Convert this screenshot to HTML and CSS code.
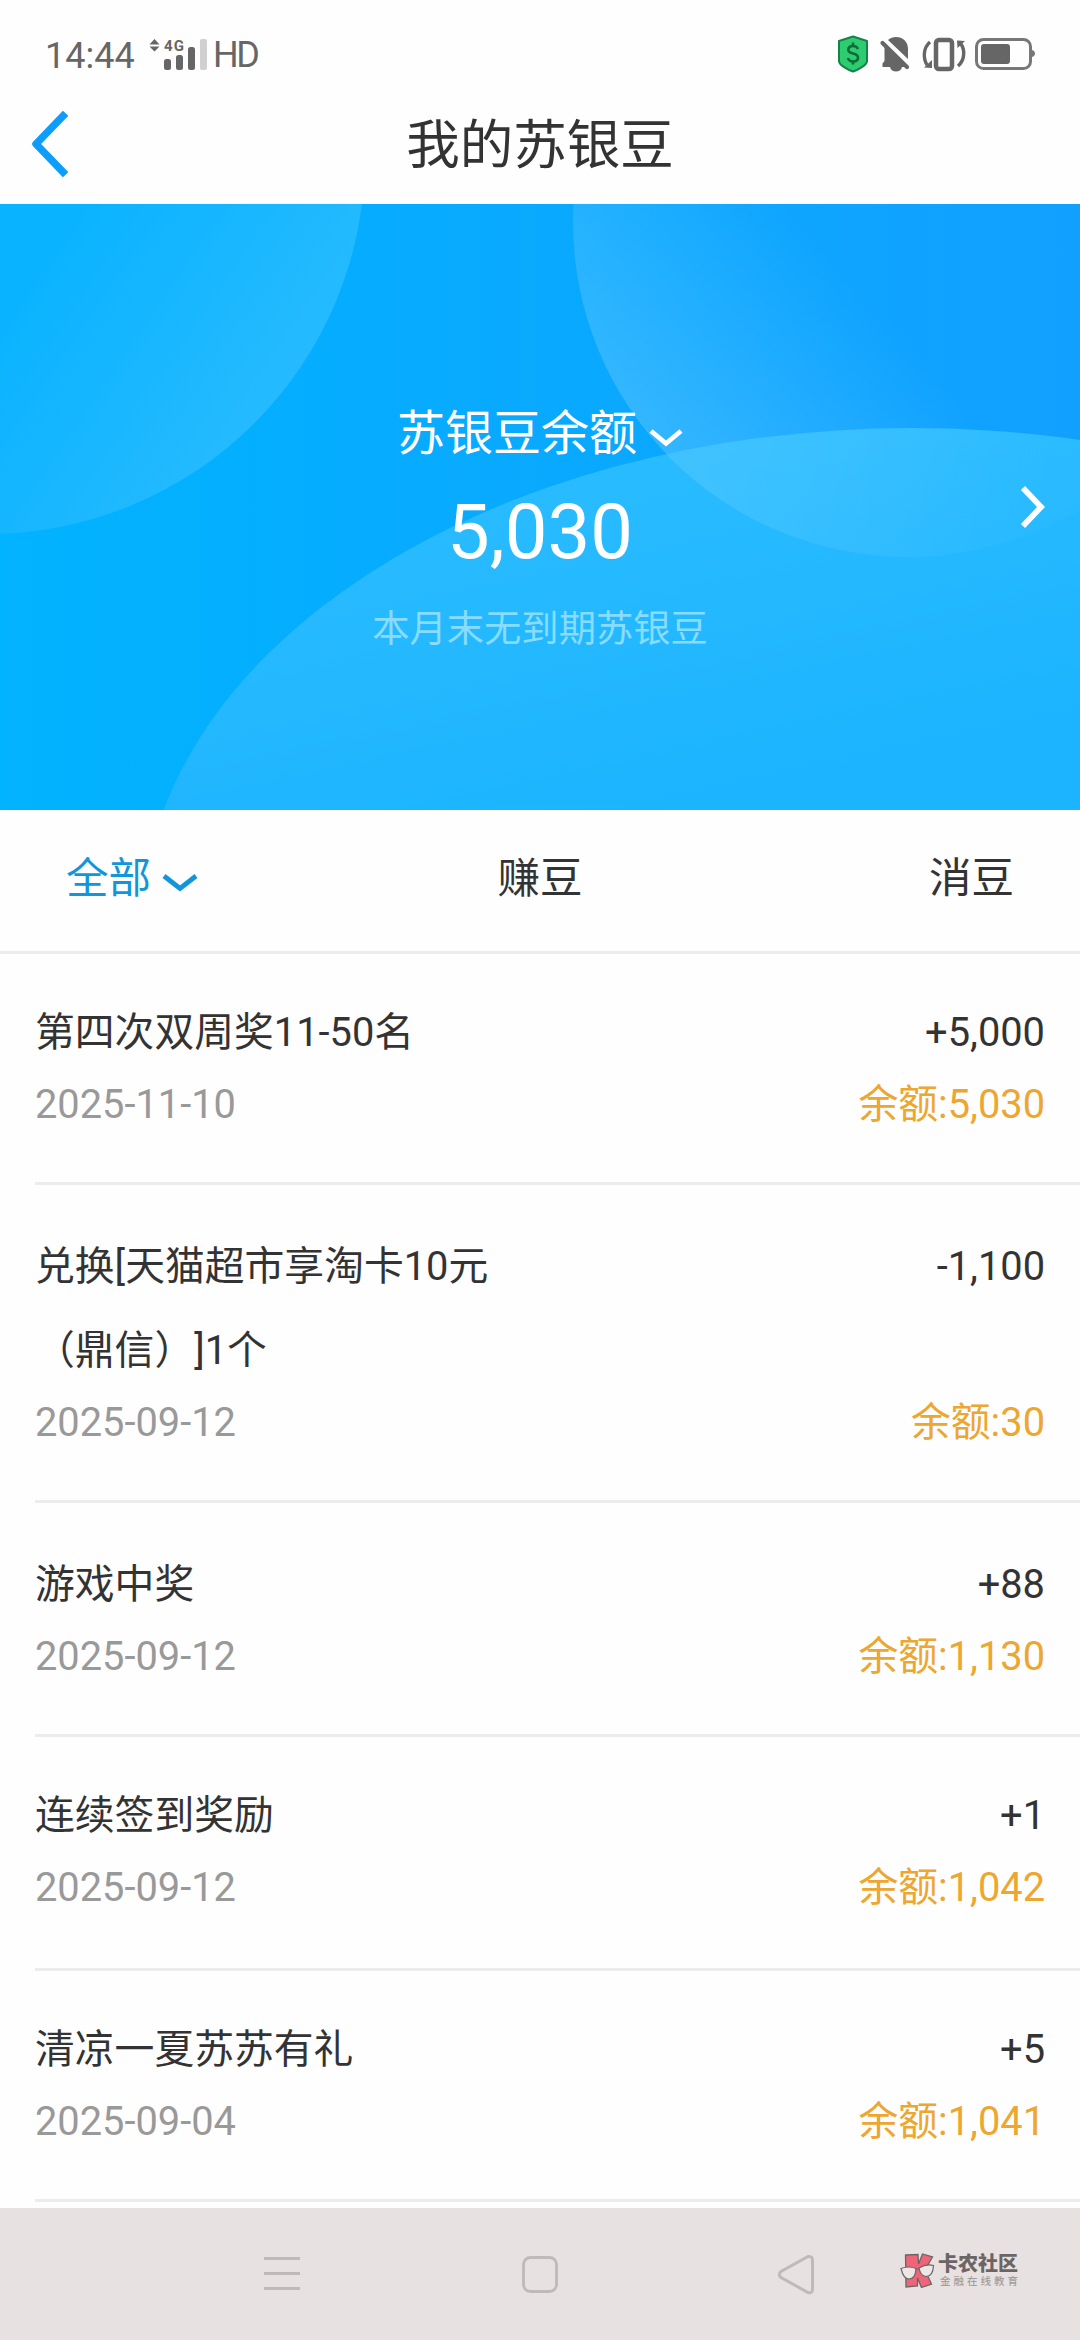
FILE: index.html
```html
<!DOCTYPE html>
<html lang="zh-CN">
<head>
<meta charset="utf-8">
<title>我的苏银豆</title>
<link rel="stylesheet" href="styles.css">
</head>
<body>
<header class="status">
  <span class="clock">14:44</span>
  <svg class="signal" width="60" height="34" viewBox="0 0 60 34">
    <path d="M0.5 6.500L5.500 1L10.500 6.500ZM0.500 8.500L5.500 13.500L10.500 8.500Z" fill="#666"/>
    <text x="15" y="13" class="net" textLength="20">4G</text>
    <g fill="#666"><rect x="15" y="21" width="7" height="11" rx="2.500"/><rect x="27" y="17" width="7" height="15" rx="2.500"/><rect x="39" y="9" width="7" height="23" rx="2.500"/></g>
    <rect x="51" y="1" width="7" height="31" rx="2" fill="#d0d0d0"/>
  </svg>
  <span class="hd">HD</span>
  <svg class="tray" width="200" height="38" viewBox="837 35 200 38">
    <path d="M853 36.500L867 41V61C867 65 858 70 853 71.500C848 70 839 65 839 61V41Z" fill="#2ecc71" stroke="#16824a" stroke-width="2" stroke-linejoin="round"/>
    <path d="M858 49C857 46.500 855.500 46 853 46C850 46 848.300 47.500 848.300 49.800C848.300 55 858 52 858 57.500C858 60 856 61.500 853 61.500C850 61.500 848.500 60 848 58M853 42.500V46M853 61.500V64.500" fill="none" stroke="#106b3b" stroke-width="2.600"/>
    <path d="M888 40C890 38 893 37 896 37C904 37 908 43 908 49V59Z" fill="#666"/>
    <path d="M884.500 47L905 67H882.500V63.500L884.500 61Z" fill="#666"/>
    <path d="M890 67H902C901 73 891 73 890 67Z" fill="#666"/>
    <path d="M882.500 43L907 67" stroke="#666" stroke-width="4.200" stroke-linecap="round"/>
    <rect x="936" y="40" width="16" height="29" rx="3" fill="none" stroke="#666" stroke-width="4.500"/>
    <path d="M930 42C923 48 923 58 927 65M958 66C965 60 965 50 961 44" fill="none" stroke="#666" stroke-width="3.400"/>
    <path d="M924 67.500L932 68V60ZM957 40.500L965 41L957.500 48Z" fill="#666"/>
    <rect x="976.500" y="39.500" width="54" height="29" rx="7" fill="none" stroke="#777" stroke-width="3"/>
    <rect x="981" y="44" width="29" height="20" rx="3" fill="#666"/>
    <path d="M1032 50C1036 51 1036 56 1032 57Z" fill="#777"/>
  </svg>
</header>
<nav class="titlebar">
  <svg class="back" width="38" height="66" viewBox="0 0 38 66"><path d="M33 5L6 33L33 61" fill="none" stroke="#0d9dfc" stroke-width="7.500" stroke-linejoin="round" stroke-linecap="square"/></svg>
  <h1>我的苏银豆</h1>
</nav>
<section class="hero">
  <svg class="hero-bg" width="1080" height="606" viewBox="0 204 1080 606">
    <defs>
      <linearGradient id="base"><stop offset="0" stop-color="#02b3ff"/><stop offset=".3" stop-color="#05adff"/><stop offset="1" stop-color="#12a0ff"/></linearGradient>
      <linearGradient id="left" gradientUnits="userSpaceOnUse" x1="60" y1="230" x2="310" y2="400"><stop offset="0" stop-color="#0ab3ff"/><stop offset="1" stop-color="#28bbff"/></linearGradient>
      <linearGradient id="right" gradientUnits="userSpaceOnUse" x1="650" y1="440" x2="850" y2="270"><stop offset="0" stop-color="#fff" stop-opacity=".17"/><stop offset="1" stop-color="#fff" stop-opacity="0"/></linearGradient>
      <linearGradient id="hill" gradientUnits="userSpaceOnUse" x1="600" y1="430" x2="680" y2="810"><stop offset="0" stop-color="#2bbcff"/><stop offset="1" stop-color="#1cb4ff"/></linearGradient>
      <linearGradient id="lens" gradientUnits="userSpaceOnUse" x1="700" y1="450" x2="1030" y2="540"><stop offset="0" stop-color="#fff" stop-opacity=".11"/><stop offset="1" stop-color="#fff" stop-opacity=".02"/></linearGradient>
      <clipPath id="hillclip"><ellipse cx="912" cy="928" rx="770" ry="500"/></clipPath>
    </defs>
    <rect y="204" width="1080" height="606" fill="url(#base)"/>
    <circle cx="-13" cy="156" r="378" fill="url(#left)"/>
    <circle cx="908" cy="222" r="335" fill="url(#right)"/>
    <ellipse cx="912" cy="928" rx="770" ry="500" fill="url(#hill)"/>
    <circle cx="908" cy="222" r="335" fill="url(#lens)" clip-path="url(#hillclip)"/>
  </svg>
  <div class="hero-text">
    <div class="label">苏银豆余额<svg width="34" height="20" viewBox="0 0 34 20"><path d="M2 3L17 15.500L32 3" fill="none" stroke="#fff" stroke-width="4.800"/></svg></div>
    <div class="amount">5,030</div>
    <div class="note">本月末无到期苏银豆</div>
  </div>
  <svg class="more" width="26" height="44" viewBox="0 0 26 44"><path d="M3 3L21 22L3 41" fill="none" stroke="#fff" stroke-width="5.800"/></svg>
</section>
<div class="tabs">
  <div class="tab active">全部<svg width="36" height="20" viewBox="0 0 36 20"><path d="M2 3L18 15.500L34 3" fill="none" stroke="#1296db" stroke-width="4.800"/></svg></div>
  <div class="tab">赚豆</div>
  <div class="tab">消豆</div>
</div>
<main class="list">
  <article class="item"><div class="top"><span class="name">第四次双周奖11-50名</span><span>+5,000</span></div><div class="sub"><span>2025-11-10</span><span class="bal">余额:5,030</span></div></article>
  <article class="item"><div class="top"><span class="name">兑换[天猫超市享淘卡10元（鼎信）]1个</span><span>-1,100</span></div><div class="sub"><span>2025-09-12</span><span class="bal">余额:30</span></div></article>
  <article class="item"><div class="top"><span class="name">游戏中奖</span><span>+88</span></div><div class="sub"><span>2025-09-12</span><span class="bal">余额:1,130</span></div></article>
  <article class="item"><div class="top"><span class="name">连续签到奖励</span><span>+1</span></div><div class="sub"><span>2025-09-12</span><span class="bal">余额:1,042</span></div></article>
  <article class="item"><div class="top"><span class="name">清凉一夏苏苏有礼</span><span>+5</span></div><div class="sub"><span>2025-09-04</span><span class="bal">余额:1,041</span></div></article>
</main>
<footer class="sysnav">
  <svg class="menu" width="36" height="40" viewBox="0 0 36 40"><path d="M0 3.500H36M0 18.500H36M0 33.500H36" stroke="#bebaba" stroke-width="3"/></svg>
  <svg class="home" width="36" height="38" viewBox="0 0 36 38"><rect x="1.500" y="1.500" width="33" height="34" rx="7" fill="none" stroke="#bebaba" stroke-width="2.800"/></svg>
  <svg class="prev" width="38" height="42" viewBox="0 0 38 42"><path d="M31 2.500L4 17.500Q0.500 20.500 4 23.500L31 38.500Q35.500 39.500 35.500 35V6Q35.500 2 31 2.500Z" fill="none" stroke="#bebaba" stroke-width="3"/></svg>
  <div class="brand">
    <svg width="36" height="36" viewBox="0 0 36 36">
      <path d="M5.500 2L18 1.500L18.500 11L22.500 1L32.500 4L25 17L31.500 31L21.500 34.500L17.500 25V33L6 34Z" fill="#ee6478" stroke="#6c6565" stroke-width="1.300"/>
      <path d="M1 15.500Q9 12.500 16 15.500Q15.500 26 9 26Q3.500 26 1 15.500ZM19 15Q26 10.500 33.500 12.500Q33 23.500 26 23.500Q20.500 23 19 15ZM16 16.500L19 15.500" fill="#ece7e6" stroke="#6c6565" stroke-width="1.200"/>
    </svg>
    <div class="brand-text"><b>卡农社区</b><small>金融在线教育</small></div>
  </div>
</footer>
</body>
</html>
```
FILE: styles.css
```css
* { box-sizing: border-box; margin: 0; padding: 0; }
body {
  width: 1080px; height: 2340px; overflow: hidden;
  display: flex; flex-direction: column;
  background: #fefefe; color: #333;
  font-family: Roboto, "Noto Sans CJK SC", sans-serif;
  font-size: 39.800px; font-weight: 400;
  text-spacing-trim: space-all;
}
svg { display: block; flex: none; }
.status { height: 106px; display: flex; align-items: flex-start; padding: 0 43px 0 45px; color: #666; font-size: 36px; line-height: 42px; }
.clock { width: 104px; padding-top: 35px; }
.signal { margin-top: 38px; }
.net { font: 700 15px Roboto, sans-serif; fill: #666; }
.hd { padding: 34px 0 0 4px; letter-spacing: -2.500px; }
.tray { margin: 35px 0 0 auto; }
.titlebar { height: 98px; display: grid; grid-template-columns: 1fr auto 1fr; padding: 0 30px; }
.back { margin-top: 5px; }
.titlebar h1 { font-size: 53.500px; font-weight: 400; line-height: 80px; grid-column: 2; }
.hero { height: 606px; flex: none; display: grid; color: #fff; }
.hero > * { grid-area: 1 / 1; }
.hero-text { z-index: 1; display: flex; flex-direction: column; align-items: center; padding-top: 194px; }
.label { display: flex; align-items: center; gap: 12px; font-size: 48px; line-height: 72px; }
.label svg { margin-top: 7px; }
.amount { font-size: 76px; line-height: 88px; margin-top: 18px; }
.note { font-size: 37.300px; line-height: 54px; margin-top: 26px; color: #87dcff; }
.more { z-index: 1; justify-self: end; margin: 281px 34px 0 0; }
.tabs { height: 144px; flex: none; display: flex; justify-content: space-between; align-items: flex-start; padding: 37px 66px 0; font-size: 42.500px; line-height: 64px; border-bottom: 3px solid #ececec; }
.tab { flex: 1; text-align: center; }
.tab:last-child { text-align: right; }
.tab.active { display: flex; align-items: center; gap: 11px; color: #1296db; }
.tab.active svg { margin-top: 7px; }
.list { flex: 1; min-height: 0; padding-left: 35px; }
.item { padding: 37px 35px 47px 0; border-bottom: 3px solid #ececec; }
.item:nth-child(2), .item:nth-child(3) { padding-top: 40px; }
.item:nth-child(4) { padding-bottom: 50px; }
.top, .sub { display: flex; justify-content: space-between; }
.top { line-height: 84px; }
.name { width: 460px; }
.sub { line-height: 60px; color: #999; }
.bal { color: #eda62f; }
.sysnav { height: 132px; flex: none; display: flex; background: #e7e2e1; padding: 47px 61px 0 264px; }
.home { margin: 1px 0 0 222px; }
.prev { margin: -1px 0 0 219px; }
.prev + .brand { margin-left: 85px; }
.brand { display: flex; gap: 2px; height: 36px; margin-top: -2px; }
.brand-text { display: flex; flex-direction: column; color: #6c6565; white-space: nowrap; }
.brand b { font-size: 20px; line-height: 22px; font-weight: 900; }
.brand small { font-size: 10.500px; line-height: 14px; letter-spacing: 3px; color: #a39d9d; font-weight: 500; padding-left: 2px; }
```
